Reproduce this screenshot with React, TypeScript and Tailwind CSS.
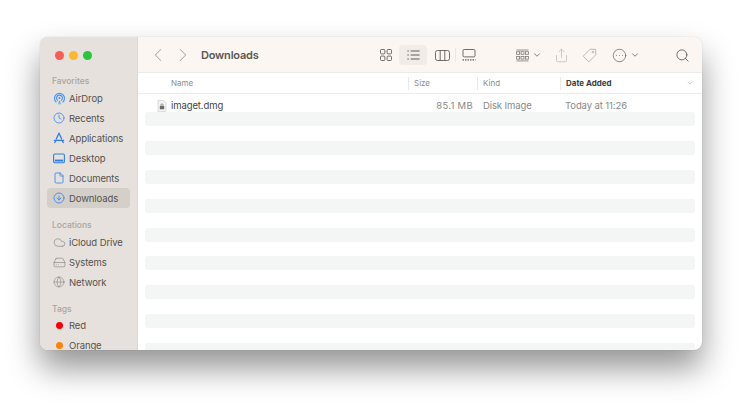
import React from "react";
import { ChevronLeft, ChevronRight, ChevronDown, Search, Share, Clock, File, Cloud, HardDrive, Globe, CircleArrowDown, CircleEllipsis } from "lucide-react";

function AirDrop() {
  return (
    <svg width="13" height="13" viewBox="0 0 12 12" fill="none" stroke="#4d94f0" strokeWidth="1.1" strokeLinecap="round">
      <circle cx="6" cy="5.6" r="1" fill="#4d94f0" stroke="none" />
      <path d="M4.2 7.6a2.7 2.7 0 1 1 3.6 0" />
      <path d="M2.9 9.2a4.6 4.6 0 1 1 6.2 0" />
      <path d="M5.3 11 6 8.2l.7 2.8" strokeWidth="0.8" />
    </svg>
  );
}
function Apps() {
  return (
    <svg width="12" height="12" viewBox="0 0 12 12" fill="none" stroke="#2f7de8" strokeWidth="1.3" strokeLinecap="round">
      <path d="M6 1.2 3.4 6.8M6 1.2l2.6 5.6M1.4 8.4h9.2M2.8 8.4 1.8 10.6M9.2 8.4l1 2.2" />
    </svg>
  );
}
function Desktop() {
  return (
    <svg width="12" height="11" viewBox="0 0 12 11" fill="none" stroke="#2f7de8" strokeWidth="1.1">
      <rect x="0.6" y="1" width="10.8" height="8.8" rx="1.2" />
      <rect x="1.8" y="6.6" width="8.4" height="1.9" fill="#2f7de8" stroke="none" />
    </svg>
  );
}
function Dmg() {
  return (
    <svg width="10" height="12" viewBox="0 0 10 12">
      <path d="M1 .5h5.6L9 3v8.5H1z" fill="#f3f3f3" stroke="#c9c9c9" strokeWidth="0.6" />
      <rect x="2.8" y="6" width="4.4" height="3.2" rx="0.5" fill="#6b6b6b" />
      <path d="M4 6V4.8a1 1 0 0 1 2 0V6" fill="none" stroke="#6b6b6b" strokeWidth="0.7" />
    </svg>
  );
}
function GridView() {
  return (
    <svg width="12" height="12" viewBox="0 0 12 12" fill="none" stroke="#5f5c59" strokeWidth="0.9">
      <rect x="0.5" y="0.5" width="4.4" height="4.4" rx="1" />
      <rect x="7.1" y="0.5" width="4.4" height="4.4" rx="1" />
      <rect x="0.5" y="7.1" width="4.4" height="4.4" rx="1" />
      <rect x="7.1" y="7.1" width="4.4" height="4.4" rx="1" />
    </svg>
  );
}
function ListView() {
  return (
    <svg width="13" height="10" viewBox="0 0 13 10" fill="none" stroke="#5f5c59" strokeWidth="1">
      <path d="M3.6 1h9M3.6 5h9M3.6 9h9M.4 1h1.4M.4 5h1.4M.4 9h1.4" />
    </svg>
  );
}
function ColumnView() {
  return (
    <svg width="15" height="11" viewBox="0 0 15 11" fill="none" stroke="#5f5c59" strokeWidth="0.9">
      <rect x="0.5" y="0.5" width="14" height="10" rx="2" />
      <path d="M5.2.5v10M9.8.5v10" />
    </svg>
  );
}
function GalleryView() {
  return (
    <svg width="14" height="12" viewBox="0 0 14 12" fill="none" stroke="#5f5c59" strokeWidth="0.9">
      <rect x="1" y="0.5" width="12" height="7.4" rx="1.2" />
      <path d="M.5 10.8h13" strokeDasharray="1.5 1" strokeWidth="1.2" />
    </svg>
  );
}
function GroupIcon() {
  return (
    <svg width="13" height="13" viewBox="0 0 13 12" fill="none" stroke="#7d7a77" strokeWidth="0.8">
      <path d="M.5.5h12" />
      <rect x="0.6" y="2.2" width="3" height="2.6" />
      <rect x="5" y="2.2" width="3" height="2.6" />
      <rect x="9.4" y="2.2" width="3" height="2.6" />
      <rect x="0.6" y="7" width="3" height="2.6" />
      <rect x="5" y="7" width="3" height="2.6" />
      <rect x="9.4" y="7" width="3" height="2.6" />
      <path d="M.5 11.4h12" />
    </svg>
  );
}
function TagIcon() {
  return (
    <svg width="15" height="15" viewBox="0 0 15 15" fill="none" stroke="#b7b3af" strokeWidth="0.9" strokeLinejoin="round">
      <path d="M8.2 1.2 13.6 1.4 13.8 6.8 6.8 13.8 1.2 8.2Z" />
      <circle cx="11" cy="4" r="0.9" />
    </svg>
  );
}

function Item({ icon, label, active }: { icon: React.ReactNode; label: string; active?: boolean }) {
  return (
    <div className={`h-5 shrink-0 mx-[7px] rounded-[4px] flex items-center ${active ? "bg-[#d4cfc9]" : ""}`}>
      <div className="w-[22px] pl-[2px] flex justify-center shrink-0">{icon}</div>
      <span className="text-[9.5px] leading-none pt-[1px] text-[#55524f] tracking-[-0.1px]">{label}</span>
    </div>
  );
}

function Heading({ children, className }: { children: string; className?: string }) {
  return <div className={`shrink-0 pl-3 text-[8.5px] leading-none font-medium text-[#a9a5a1] ${className ?? ""}`}>{children}</div>;
}

const rows = [0, 1, 2, 3, 4, 5, 6, 7, 8];

export default function App() {
  return (
    <div className="w-[742px] h-[413px] bg-white overflow-hidden pt-[37px] pl-[40px] font-['Inter',sans-serif]">
      <div className="w-[662px] h-[313px] rounded-[8px] overflow-hidden flex bg-white shadow-[0_18px_32px_rgba(0,0,0,0.42),0_0_1px_rgba(0,0,0,0.3)]">
        <aside className="w-[98px] shrink-0 bg-[#e6e1dc] flex flex-col overflow-hidden border-r border-[#dcd8d3]">
          <div className="shrink-0 h-[36px] flex items-center gap-[5px] pl-[15px] pt-[1px]">
            <span className="w-[9px] h-[9px] rounded-full bg-[#fa5b53]" />
            <span className="w-[9px] h-[9px] rounded-full bg-[#fdb72d]" />
            <span className="w-[9px] h-[9px] rounded-full bg-[#29c53f]" />
          </div>
          <Heading className="mt-[4px] mb-[3px] h-[8px]">Favorites</Heading>
          <Item icon={<AirDrop />} label="AirDrop" />
          <Item icon={<Clock size={12} color="#3f8bec" strokeWidth={1.7} />} label="Recents" />
          <Item icon={<Apps />} label="Applications" />
          <Item icon={<Desktop />} label="Desktop" />
          <Item icon={<File size={12} color="#3f8bec" strokeWidth={1.8} />} label="Documents" />
          <Item icon={<CircleArrowDown size={12} color="#3f8bec" strokeWidth={1.8} />} label="Downloads" active />
          <Heading className="mt-[13px] mb-[3px] h-[8px]">Locations</Heading>
          <Item icon={<Cloud size={13} color="#807c78" strokeWidth={1.1} />} label="iCloud Drive" />
          <Item icon={<HardDrive size={13} color="#807c78" strokeWidth={1.1} />} label="Systems" />
          <Item icon={<Globe size={12} color="#807c78" strokeWidth={1.1} />} label="Network" />
          <Heading className="mt-[13px] mb-[2px] h-[8px]">Tags</Heading>
          <Item icon={<span className="w-[7px] h-[7px] rounded-full bg-[#fb0007] block" />} label="Red" />
          <Item icon={<span className="w-[7px] h-[7px] rounded-full bg-[#fd8208] block" />} label="Orange" />
        </aside>
        <main className="flex-1 min-w-0 flex flex-col">
          <header className="h-[36px] shrink-0 bg-[#fbf6f1] flex items-center border-b border-[#eeeae6] pt-[1px]">
            <ChevronLeft size={22} color="#aeaba8" strokeWidth={1.1} className="ml-[9px]" />
            <ChevronRight size={22} color="#aeaba8" strokeWidth={1.1} className="ml-[3px]" />
            <span className="ml-[7px] w-[57px] whitespace-nowrap text-[11px] tracking-[-0.2px] font-semibold text-[#5b5855]">Downloads</span>
            <div className="ml-[117px] flex items-center">
              <div className="w-[22px] flex justify-center"><GridView /></div>
              <div className="ml-[2px] w-[28px] h-[20px] rounded-[4px] bg-[#f1ece7] flex justify-center items-center"><ListView /></div>
              <div className="ml-[2px] w-[26px] flex justify-center"><ColumnView /></div>
              <div className="w-[1px] h-[14px] bg-[#ebe7e2]" />
              <div className="w-[25px] flex justify-center"><GalleryView /></div>
              <div className="ml-[34px] w-[14px] flex justify-center"><GroupIcon /></div>
              <ChevronDown size={10} color="#6a6764" strokeWidth={2} className="ml-[3px]" />
              <Share size={15} color="#b7b3af" strokeWidth={1.1} className="ml-[12px]" />
              <div className="ml-[13px]"><TagIcon /></div>
              <CircleEllipsis size={15} color="#5f5c59" strokeWidth={1.1} className="ml-[15px]" />
              <ChevronDown size={10} color="#6a6764" strokeWidth={2} className="ml-[3px]" />
              <Search size={15} color="#5f5c59" strokeWidth={1.4} className="ml-[35px]" />
            </div>
          </header>
          <div className="h-[21px] shrink-0 flex items-center border-b border-[#ececec] text-[8px] text-[#8c8c8c]">
            <span className="ml-[33px] w-[237px]">Name</span>
            <div className="w-[1px] h-[13px] bg-[#e8e8e8]" />
            <span className="ml-[5px] w-[63px]">Size</span>
            <div className="w-[1px] h-[13px] bg-[#e8e8e8]" />
            <span className="ml-[5px] w-[77px]">Kind</span>
            <div className="w-[1px] h-[13px] bg-[#e8e8e8]" />
            <span className="ml-[5px] w-[120px] font-bold text-[#3d3d3d]">Date Added</span>
            <ChevronDown size={8} color="#a0a0a0" strokeWidth={1.5} />
          </div>
          <div className="flex-1 min-h-0 overflow-hidden">
            <div className="h-[18px] pt-[6px] flex items-center text-[9.5px] tracking-[-0.1px]">
              <div className="ml-[19px] w-[14px]"><Dmg /></div>
              <span className="w-[217px] text-[#444]">imaget.dmg</span>
              <span className="w-[85px] text-right text-[#888] tracking-[0.3px]">85.1 MB</span>
              <span className="ml-[10px] w-[82px] text-[#888]">Disk Image</span>
              <span className="text-[#888]">Today at 11:26</span>
            </div>
            <div className="flex flex-col gap-[14.9px]">
              {rows.map((r) => (
                <div key={r} className="shrink-0 h-[14px] mx-[7px] rounded-[3px] bg-[#f4f5f5]" />
              ))}
            </div>
          </div>
        </main>
      </div>
    </div>
  );
}
